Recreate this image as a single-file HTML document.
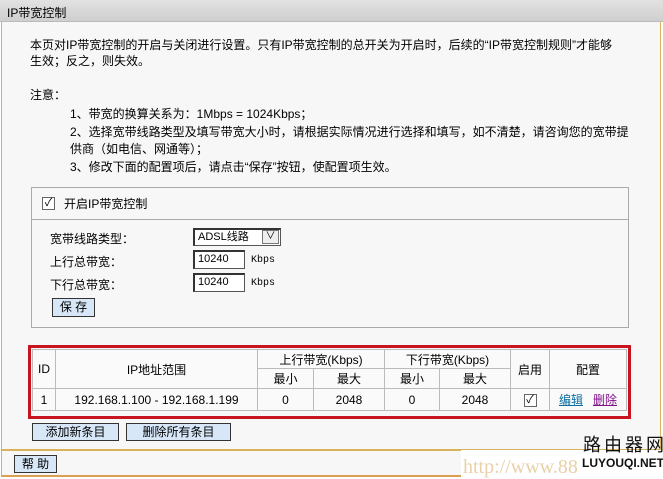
<!DOCTYPE html>
<html><head><meta charset="utf-8"><style>
*{margin:0;padding:0;box-sizing:border-box}
body{width:663px;height:477px;overflow:hidden;background:#fff;font:12px "Liberation Sans","Noto Sans CJK SC","WenQuanYi Zen Hei",sans-serif;color:#000;position:relative}
.a{position:absolute;white-space:nowrap}
.hdr{left:0;top:0;width:663px;height:22px;background:linear-gradient(#e2e2e2,#cfcfcf);border-bottom:1px solid #bbb}
.main{left:1px;top:22px;width:660px;height:428px;background:#f7f7f7;border:1px solid #d9b35c;border-top:none}
.help{left:1px;top:450px;width:460px;height:27px;background:#f7f7f7;border-left:1px solid #d9b35c;border-bottom:2px solid #d9a050;border-top:1px solid #d9b35c}
.btn{background:#d7e7f7;border:1px solid #333;text-align:center;line-height:16px}
.box{border:1px solid #aaa}
.inp{background:#fff;border:1px solid #555;border-top:2px solid #333;border-left:2px solid #333;padding-left:3px;line-height:14px}
table{border-collapse:collapse;background:#fafafa}
td{border:1px solid #bbb;text-align:center;font-size:12px}
.cb{width:13px;height:13px;border:1px solid #666;background:#fff;font-size:11px;line-height:11px;text-align:center}
</style></head><body>
<div class="a hdr"></div>
<div class="a" style="left:7px;top:4px">IP带宽控制</div>
<div class="a main"></div>
<div class="a help"></div>
<div class="a" style="left:30px;top:36px">本页对IP带宽控制的开启与关闭进行设置。只有IP带宽控制的总开关为开启时，后续的“IP带宽控制规则”才能够</div>
<div class="a" style="left:30px;top:52px">生效；反之，则失效。</div>
<div class="a" style="left:30px;top:86px">注意：</div>
<div class="a" style="left:70px;top:105px">1、带宽的换算关系为：1Mbps = 1024Kbps；</div>
<div class="a" style="left:70px;top:123px">2、选择宽带线路类型及填写带宽大小时，请根据实际情况进行选择和填写，如不清楚，请咨询您的宽带提</div>
<div class="a" style="left:70px;top:140px">供商（如电信、网通等）；</div>
<div class="a" style="left:70px;top:158px">3、修改下面的配置项后，请点击“保存”按钮，使配置项生效。</div>

<div class="a box" style="left:31px;top:187px;width:598px;height:33px;border-bottom:none"></div>
<div class="a box" style="left:31px;top:219px;width:598px;height:109px"></div>
<div class="a cb" style="left:42px;top:197px">✓</div>
<div class="a" style="left:64px;top:195px">开启IP带宽控制</div>
<div class="a" style="left:50px;top:230px">宽带线路类型：</div>
<div class="a" style="left:50px;top:253px">上行总带宽：</div>
<div class="a" style="left:50px;top:276px">下行总带宽：</div>
<div class="a inp" style="left:193px;top:228px;width:88px;height:18px;font-size:11px">ADSL线路</div>
<div class="a" style="left:262px;top:230px;width:17px;height:14px;border:1px solid #777;background:#eee;font-size:10px;text-align:center;line-height:12px">∨</div>
<div class="a inp" style="left:193px;top:250px;width:52px;height:19px;font-size:11px">10240</div>
<div class="a inp" style="left:193px;top:273px;width:52px;height:19px;font-size:11px">10240</div>
<div class="a" style="left:251px;top:255px;font-family:'Liberation Mono',monospace;font-size:10px">Kbps</div>
<div class="a" style="left:251px;top:278px;font-family:'Liberation Mono',monospace;font-size:10px">Kbps</div>
<div class="a btn" style="left:52px;top:298px;width:43px;height:19px;line-height:17px">保 存</div>

<div class="a" style="left:28px;top:345px;width:603px;height:74px;border:3px solid #c8141e"></div>
<table class="a" style="left:32px;top:349px;width:595px">
<tr style="height:19px"><td rowspan="2" style="width:23px">ID</td><td rowspan="2" style="width:202px">IP地址范围</td><td colspan="2">上行带宽(Kbps)</td><td colspan="2">下行带宽(Kbps)</td><td rowspan="2" style="width:39px">启用</td><td rowspan="2">配置</td></tr>
<tr style="height:20px"><td style="width:56px">最小</td><td style="width:71px">最大</td><td style="width:55px">最小</td><td style="width:71px">最大</td></tr>
<tr style="height:22px"><td>1</td><td>192.168.1.100 - 192.168.1.199</td><td>0</td><td>2048</td><td>0</td><td>2048</td><td><span class="cb" style="display:inline-block">✓</span></td><td><span style="color:#0a6ea0;text-decoration:underline">编辑</span>&nbsp;&nbsp;&nbsp;<span style="color:#80108a;text-decoration:underline">删除</span></td></tr>
</table>
<div class="a btn" style="left:32px;top:423px;width:87px;height:18px">添加新条目</div>
<div class="a btn" style="left:126px;top:423px;width:105px;height:18px">删除所有条目</div>
<div class="a btn" style="left:14px;top:455px;width:43px;height:18px">帮 助</div>
<div class="a" style="left:463px;top:456px;font:20px 'Liberation Serif',serif;color:#e8d0a8">http://www.88</div>
<div class="a" style="left:583px;top:431px;font-size:18px;letter-spacing:3px;color:#111">路由器网</div>
<div class="a" style="left:582px;top:456px;font-size:12px;font-weight:bold;color:#111">LUYOUQI.NET</div>
</body></html>
